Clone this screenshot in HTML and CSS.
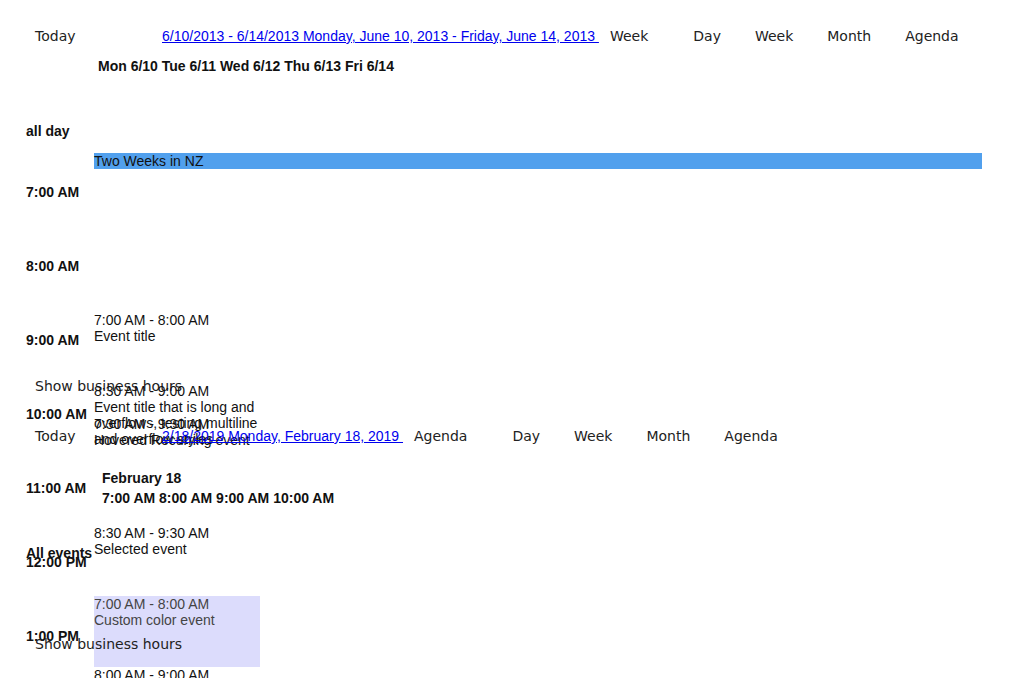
FILE: index.html
```html
<!DOCTYPE html>
<html>
<head>
<meta charset="utf-8">
<link rel="stylesheet" href="styles.css">
</head>
<body>
<div class="scheduler s1">
  <div class="toolbar">
    <span class="btn today">Today</span>
    <a class="range" href="#">6/10/2013 - 6/14/2013 Monday, June 10, 2013 - Friday, June 14, 2013 </a>
    <span class="btn current">Week</span>
    <div class="views">
      <span class="btn view">Day</span>
      <span class="btn view">Week</span>
      <span class="btn view">Month</span>
      <span class="btn view">Agenda</span>
    </div>
  </div>
  <div class="content">
    <div class="week-head">Mon 6/10 Tue 6/11 Wed 6/12 Thu 6/13 Fri 6/14</div>
    <div class="allday-label">all day</div>
    <div class="allday-event">Two Weeks in NZ</div>
    <div class="times">
      <div class="slot">7:00 AM</div>
      <div class="slot">8:00 AM</div>
      <div class="slot">9:00 AM</div>
      <div class="slot">10:00 AM</div>
      <div class="slot">11:00 AM</div>
      <div class="slot">12:00 PM</div>
      <div class="slot">1:00 PM</div>
    </div>
  </div>
  <div class="footer">Show business hours</div>

  <div class="event e1"><div>7:00 AM - 8:00 AM</div><div>Event title</div></div>
  <div class="event e2"><div>8:30 AM - 9:00 AM</div><div>Event title that is long and overflows, testing multiline and overflow styles</div></div>
  <div class="event e3"><div>7:30 AM - 9:30 AM</div><div>Hovered Recurring event</div></div>
  <div class="event e4"><div>8:30 AM - 9:30 AM</div><div>Selected event</div></div>
  <div class="event e5 custom"><div>7:00 AM - 8:00 AM</div><div>Custom color event</div></div>
  <div class="event e6"><div>8:00 AM - 9:00 AM</div></div>
</div>

<div class="scheduler s2">
  <div class="toolbar">
    <span class="btn today">Today</span>
    <a class="range" href="#">2/18/2019 Monday, February 18, 2019 </a>
    <span class="btn current">Agenda</span>
    <div class="views">
      <span class="btn view">Day</span>
      <span class="btn view">Week</span>
      <span class="btn view">Month</span>
      <span class="btn view">Agenda</span>
    </div>
  </div>
  <div class="content">
    <div class="day-head">February 18</div>
    <div class="hours-head">7:00 AM 8:00 AM 9:00 AM 10:00 AM</div>
    <div class="all-events">All events</div>
  </div>
  <div class="footer">Show business hours</div>
</div>
</body>
</html>
```

FILE: styles.css
```css
html, body {
  margin: 0;
  padding: 0;
  background: #ffffff;
}

body {
  font-family: "Liberation Sans", Arial, sans-serif;
  font-size: 14px;
  line-height: 16px;
  color: #111;
}

.scheduler {
  position: relative;
  display: flex;
  flex-direction: column;
}

.s1 {
  height: 400px;
}

.s2 {
  height: 278px;
}

.toolbar {
  display: flex;
  align-items: center;
  padding: 28px 0 0 35px;
  height: 16px;
  white-space: nowrap;
}

.btn {
  font-family: "DejaVu Sans", sans-serif;
  font-size: 14px;
  line-height: 16px;
  color: #222;
}

.today {
  width: 127px;
}

.range {
  color: #0000ee;
  text-decoration: underline;
  white-space: pre;
}

.current {
  margin-left: 11px;
  margin-right: 28px;
}

.views {
  display: flex;
}

.view {
  padding: 0 17px;
}

.s1 .content {
  height: 334px;
}

.s2 .content {
  height: 192px;
}

.week-head {
  margin-top: 14px;
  padding-left: 98px;
  font-weight: bold;
}

.allday-label {
  margin-top: 49px;
  padding-left: 26px;
  font-weight: bold;
}

.allday-event {
  margin: 14px 0 0 94px;
  width: 888px;
  height: 16px;
  background: #51a0ed;
  color: #111;
}

.times {
  margin-top: 15px;
}

.slot {
  height: 74px;
  padding-left: 26px;
  font-weight: bold;
}

.footer {
  padding-left: 35px;
  font-family: "DejaVu Sans", sans-serif;
  font-size: 14px;
  line-height: 16px;
  color: #222;
}

.event {
  position: absolute;
  left: 94px;
  width: 166px;
  height: 71px;
  color: #111;
}

.e1 { top: 312px; }
.e2 { top: 383px; }
.e3 { top: 416px; }
.e4 { top: 525px; }
.e5 { top: 596px; }
.e6 { top: 667px; }

.custom {
  background: #dcdcfc;
  color: #444;
}

.day-head {
  margin-top: 26px;
  padding-left: 102px;
  font-weight: bold;
}

.hours-head {
  margin-top: 4px;
  padding-left: 102px;
  font-weight: bold;
}

.all-events {
  margin-top: 39px;
  padding-left: 26px;
  font-weight: bold;
}
```
